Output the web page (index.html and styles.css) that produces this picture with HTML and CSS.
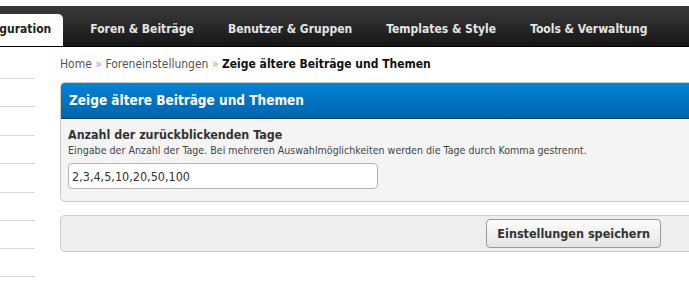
FILE: index.html
```html
<!DOCTYPE html>
<html lang="de">
<head>
    <meta charset="UTF-8">
    <title>Zeige ältere Beiträge und Themen</title>
    <link rel="stylesheet" href="styles.css">
</head>
<body>
    <div class="navbar">
        <ul class="tabs">
            <li class="active"><a href="#">Konfiguration</a></li>
            <li><a href="#">Foren &amp; Beiträge</a></li>
            <li><a href="#">Benutzer &amp; Gruppen</a></li>
            <li><a href="#">Templates &amp; Style</a></li>
            <li><a href="#">Tools &amp; Verwaltung</a></li>
        </ul>
    </div>

    <div class="page">
        <ul class="sidebar">
            <li></li><li></li><li></li><li></li><li></li><li></li><li></li>
        </ul>

        <div class="main-content">
            <div class="breadcrumb">
                <a href="#">Home</a> <span class="sep">»</span>
                <a href="#">Foreneinstellungen</a> <span class="sep">»</span>
                <strong>Zeige ältere Beiträge und Themen</strong>
            </div>

            <div class="panel">
                <div class="panel-head">Zeige ältere Beiträge und Themen</div>
                <div class="panel-body">
                    <label class="field-title" for="days">Anzahl der zurückblickenden Tage</label>
                    <div class="field-desc">Eingabe der Anzahl der Tage. Bei mehreren Auswahlmöglichkeiten werden die Tage durch Komma gestrennt.</div>
                    <input type="text" id="days" class="text-input" value="2,3,4,5,10,20,50,100">
                </div>
            </div>

            <div class="submit-bar">
                <button class="btn">Einstellungen speichern</button>
            </div>
        </div>
    </div>
</body>
</html>
```

FILE: styles.css
```css
:root {
    --text-dark: #333;
    --text-grey: #666;
    --border-color: #ccc;
    --blue-top: #0283d6;
    --blue-bottom: #0064ad;
}

body {
    margin: 0;
    font-family: "DejaVu Sans Condensed", "DejaVu Sans", sans-serif;
    color: var(--text-dark);
    background: #fff;
    overflow: hidden;
}

/* Navigation */
.navbar {
    margin-top: 6px;
    height: 40px;
    background: linear-gradient(#3b3b3b, #161616);
    border-bottom: 1px solid #000;
    overflow: hidden;
}

.tabs {
    list-style: none;
    margin: 0 0 0 -46px;
    padding: 8px 0 0;
    display: flex;
    height: 32px;
}

.tabs a {
    display: block;
    height: 32px;
    line-height: 30px;
    padding: 0 17px;
    color: #e4e4e4;
    font-size: 12px;
    font-weight: bold;
    text-decoration: none;
    white-space: nowrap;
}

.tabs .active a {
    background: #fff;
    color: #222;
    border-radius: 0 5px 0 0;
    padding: 0 12px 0 14px;
    margin-right: 10px;
    height: 33px;
}

/* Layout */
.page {
    display: flex;
}

.sidebar {
    list-style: none;
    margin: 31px 0 0;
    padding: 0;
    width: 35px;
    flex: none;
}

.sidebar li {
    height: 28.4px;
    border-top: 1px solid #d8d8d8;
    box-sizing: border-box;
}

.sidebar li:last-child {
    border-bottom: 1px solid #d8d8d8;
}

.main-content {
    margin-left: 25px;
    width: 640px;
    flex: none;
}

.breadcrumb {
    margin-top: 10px;
    font-size: 12px;
    color: var(--text-grey);
}

.breadcrumb a {
    color: #555;
    text-decoration: none;
}

.breadcrumb .sep {
    color: #aaa;
}

.breadcrumb strong {
    color: #111;
}

/* Panel */
.panel {
    margin-top: 11px;
    border: 1px solid var(--border-color);
    border-radius: 5px 0 0 5px;
    background: #f4f4f4;
}

.panel-head {
    background: linear-gradient(var(--blue-top), var(--blue-bottom));
    border-bottom: 1px solid #0c3f66;
    border-radius: 4px 0 0 0;
    color: #fff;
    font-size: 13.5px;
    font-weight: bold;
    height: 35px;
    line-height: 35px;
    padding-left: 8px;
}

.panel-body {
    padding: 8px 7px 12px;
}

.field-title {
    display: block;
    font-size: 12.4px;
    font-weight: bold;
    color: #333;
}

.field-desc {
    font-size: 10.6px;
    color: #444;
    margin-top: 2px;
}

.text-input {
    display: block;
    margin-top: 7px;
    width: 310px;
    height: 26px;
    box-sizing: border-box;
    border: 1px solid #b5b5b5;
    border-radius: 4px;
    background: #fff;
    padding: 0 3px;
    font-family: inherit;
    font-size: 12.5px;
    color: #333;
}

/* Submit bar */
.submit-bar {
    margin-top: 13px;
    border: 1px solid var(--border-color);
    border-radius: 5px 0 0 5px;
    background: #eee;
    height: 35px;
    display: flex;
    align-items: center;
    justify-content: flex-end;
    padding-right: 38px;
}

.btn {
    height: 29px;
    padding: 0 10px;
    border: 1px solid #999;
    border-radius: 4px;
    background: linear-gradient(#fdfdfd, #e4e4e4);
    font-family: inherit;
    font-size: 12.5px;
    font-weight: bold;
    color: #333;
}
```
